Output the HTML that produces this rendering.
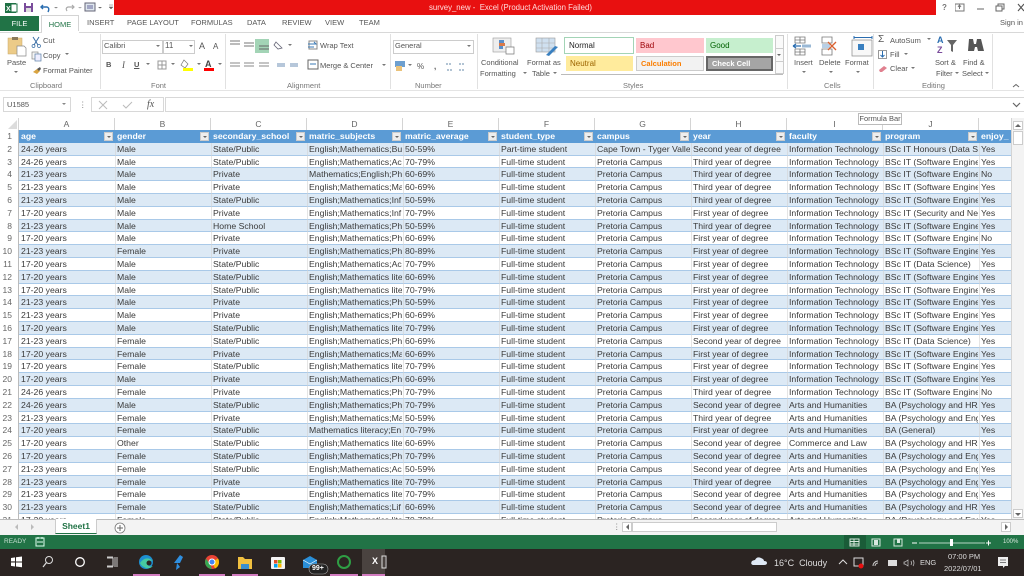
<!DOCTYPE html>
<html><head><meta charset="utf-8"><style>
html,body{margin:0;padding:0;background:#fff}
#p{position:relative;width:1024px;height:576px;overflow:hidden;background:#fff;font-family:"Liberation Sans",sans-serif;color:#555;font-size:7.5px;filter:blur(.3px)}
.a{position:absolute}
.t{position:absolute;white-space:nowrap;line-height:10px}
.g{color:#777}
#sheet{position:absolute;left:0;top:130px;width:1011px;height:389px;overflow:hidden}
.r{position:absolute;left:0;width:1011px;height:12.8px;line-height:12.8px;font-size:8.7px;color:#3a3a3a;box-sizing:border-box;border-bottom:1px solid #a9c9e8}
.r.o{background:#dce9f5}
.r i{position:absolute;top:0;font-style:normal;overflow:hidden;white-space:nowrap;height:12px;width:95px;padding-left:2px;box-sizing:border-box}
.r b{position:absolute;left:0;top:0;width:19px;text-align:right;padding-right:6px;box-sizing:border-box;font-weight:normal;color:#666;background:#fff;height:12.8px;border-right:1px solid #bbb;font-size:8.5px}
.c1{left:19px}.c2{left:115px}.c3{left:211px}.c4{left:307px}.c5{left:403px}.c6{left:499px}.c7{left:595px}.c8{left:691px}.c9{left:787px}.c10{left:883px}.c11{left:979px}
.r i.c11{width:31px}
.r.h{background:#5b9bd5;color:#fff;font-weight:bold;border-bottom:1px solid #5b9bd5}
.r.h b{background:#fff;font-weight:normal;color:#666}
.f{position:absolute;top:2px;width:9px;height:9px;background:#eee;border:1px solid #ccc;box-sizing:border-box}
.f:after{content:"";position:absolute;left:2px;top:3px;border:2px solid transparent;border-top:2px solid #666}
.ch{position:absolute;top:118px;height:12px;width:96px;text-align:center;line-height:12px;font-size:8.5px;color:#666;border-right:1px solid #d4d4d4;box-sizing:border-box;background:#fff}
.style{position:absolute;height:15px;line-height:15px;font-size:8px;padding-left:4px;box-sizing:border-box}
.sep{position:absolute;top:34px;width:1px;height:55px;background:#e1e1e1}
</style></head><body><div id="p">

<!-- title bar -->
<div class="a" style="left:114px;top:0;width:822px;height:15px;background:#e81010"></div>
<div class="t" style="left:429px;top:3px;color:#fdd;font-size:7.8px">survey_new -&nbsp; Excel (Product Activation Failed)</div>
<svg class="a" style="left:0;top:0" width="114" height="15" viewBox="0 0 114 15">
<rect x="5" y="3" width="11" height="10" fill="#1f7145"/><rect x="11" y="4" width="6" height="8" fill="#fff" stroke="#1f7145"/><text x="6" y="11" font-size="7" font-weight="bold" fill="#fff" font-family="Liberation Sans">X</text>
<rect x="24" y="3" width="9" height="9" fill="#7a4c9b"/><rect x="26" y="3" width="5" height="3" fill="#fff"/><rect x="26" y="8" width="5" height="4" fill="#ddd"/>
<path d="M43 5 L41 7 L43 9 M41 7 H47 Q50 8 48 12" stroke="#2a6db0" stroke-width="1.4" fill="none"/><path d="M54 7l2 1.500 2-1.500z" fill="#888"/>
<path d="M72 5 L74 7 L72 9 M74 7 H68 Q65 8 67 11" stroke="#aaa" stroke-width="1.2" fill="none"/><path d="M78 7l2 1.500 2-1.500z" fill="#aaa"/>
<rect x="85" y="3" width="10" height="8" fill="#dfe7ef" stroke="#667"/><path d="M87 6h6M87 8h6" stroke="#669"/><path d="M98 7l2 1.500 2-1.500z" fill="#666"/><path d="M109 5h4M109 7l2 2 2-2z" fill="#666" stroke="#666" stroke-width=".5"/>
</svg>
<div class="t g" style="left:942px;top:3px;font-size:8px;font-weight:bold">?</div>
<svg class="a" style="left:955px;top:0" width="69" height="15"><rect x="0" y="4" width="9" height="7" fill="none" stroke="#777"/><path d="M4.500 5v4M3 7l1.500-2 1.500 2" stroke="#777" fill="none"/><path d="M22 9h7" stroke="#666"/><rect x="41" y="6" width="6" height="5" fill="none" stroke="#666"/><path d="M43 6V4h6v5h-2" stroke="#666" fill="none"/><path d="M63 4l6 7M69 4l-6 7" stroke="#555" stroke-width="1.1"/></svg>

<!-- tabs -->
<div class="a" style="left:0;top:16px;width:39px;height:15px;background:#217346;color:#fff;text-align:center;line-height:15px;font-size:7.5px">FILE</div>
<div class="a" style="left:41px;top:15px;width:38px;height:17px;background:#fff;border:1px solid #d4d4d4;border-bottom:0;box-sizing:border-box;text-align:center;line-height:17px;color:#217346;font-size:7.5px">HOME</div>
<div class="a" style="left:0;top:31.500px;width:1024px;height:1px;background:#d8d8d8"></div>
<div class="a" style="left:41.500px;top:31px;width:37px;height:2px;background:#fff"></div>
<div class="t" style="left:87px;top:18px">INSERT</div>
<div class="t" style="left:127px;top:18px">PAGE LAYOUT</div>
<div class="t" style="left:191px;top:18px">FORMULAS</div>
<div class="t" style="left:247px;top:18px">DATA</div>
<div class="t" style="left:282px;top:18px">REVIEW</div>
<div class="t" style="left:325px;top:18px">VIEW</div>
<div class="t" style="left:359px;top:18px">TEAM</div>
<div class="t" style="left:1000px;top:18px">Sign in</div>

<!-- clipboard -->
<svg class="a" style="left:6px;top:36px" width="22" height="22"><rect x="2" y="2" width="14" height="16" fill="#eccb88" stroke="#c8a868" stroke-width=".5"/><rect x="6" y="1" width="6" height="3" fill="#8a7a5a"/><path d="M11 10h7l2 2v8h-9z" fill="#fff" stroke="#888" stroke-width=".7"/></svg>
<div class="t" style="left:7px;top:58px;font-size:7.5px">Paste</div>
<div class="a" style="left:14px;top:71px;border:2px solid transparent;border-top:2px solid #777"></div>
<svg class="a" style="left:31px;top:36px" width="11" height="40"><path d="M2 1l5 8M8 1L3 9" stroke="#3a6ea5" fill="none"/><circle cx="2.500" cy="10" r="1.500" fill="none" stroke="#3a6ea5" stroke-width=".7"/><circle cx="8" cy="10" r="1.500" fill="none" stroke="#3a6ea5" stroke-width=".7"/><rect x="1" y="16" width="6" height="7" fill="#f4f4f4" stroke="#888" stroke-width=".7"/><rect x="4" y="18" width="6" height="7" fill="#eef" stroke="#5b7fa5" stroke-width=".7"/><path d="M2 36l4-3 3 2-3 3z" fill="#d9a441"/><path d="M6 33l3-2 1 2-2 2z" fill="#555"/></svg>
<div class="t" style="left:43px;top:36px">Cut</div>
<div class="t" style="left:43px;top:51px">Copy</div>
<div class="a" style="left:65px;top:53px;border:2px solid transparent;border-top:2px solid #777"></div>
<div class="t" style="left:43px;top:66px">Format Painter</div>
<div class="t g" style="left:30px;top:81px">Clipboard</div>
<div class="sep" style="left:100px"></div>

<!-- font -->
<div class="a" style="left:102px;top:40px;width:61px;height:14px;border:1px solid #ccc;box-sizing:border-box"></div>
<div class="t" style="left:104px;top:41px">Calibri</div>
<div class="a" style="left:156px;top:45px;border:2px solid transparent;border-top:2px solid #777"></div>
<div class="a" style="left:163px;top:40px;width:32px;height:14px;border:1px solid #ccc;box-sizing:border-box"></div>
<div class="t" style="left:165px;top:41px;font-size:8px">11</div>
<div class="a" style="left:189px;top:45px;border:2px solid transparent;border-top:2px solid #777"></div>
<div class="t" style="left:199px;top:41px;font-size:9px">A</div><div class="t" style="left:213px;top:42px;font-size:8px">A</div>
<div class="t" style="left:106px;top:60px;font-weight:bold">B</div>
<div class="t" style="left:122px;top:60px;font-style:italic;font-family:'Liberation Serif',serif;font-size:9px">I</div>
<div class="t" style="left:134px;top:60px;text-decoration:underline;font-weight:bold">U</div>
<svg class="a" style="left:143px;top:58px" width="82" height="14"><path d="M3 5l2 2 2-2z" fill="#777"/><rect x="15" y="3" width="8" height="8" fill="none" stroke="#999"/><path d="M19 3v8M15 7h8" stroke="#999"/><path d="M28 5l2 2 2-2z" fill="#777"/><path d="M41 2l4 4-3 4-4-3z" fill="#fff" stroke="#777" stroke-width=".7"/><rect x="40" y="10" width="10" height="3" fill="#ff0"/><path d="M54 5l2 2 2-2z" fill="#777"/><text x="62" y="9" font-size="9" font-weight="bold" fill="#444" font-family="Liberation Sans">A</text><rect x="61" y="10" width="10" height="3" fill="#f00"/><path d="M75 5l2 2 2-2z" fill="#777"/></svg>
<div class="t g" style="left:151px;top:81px">Font</div>
<div class="sep" style="left:225px"></div>

<!-- alignment -->
<div class="a" style="left:255px;top:39px;width:14px;height:14px;background:#a3d4b6"></div>
<svg class="a" style="left:228px;top:38px" width="82" height="34"><path d="M2 3h10M2 6h10" stroke="#777"/><path d="M16 5h10M16 8h10" stroke="#777"/><path d="M31 8h10M31 11h10" stroke="#666"/><path d="M48 4l6 6-4 1-4-4z" fill="none" stroke="#667" stroke-width=".8"/><path d="M60 6l2 2 2-2z" fill="#777"/><path d="M2 25h10M2 28h10M16 25h10M16 28h10M31 25h10M31 28h10" stroke="#888"/><path d="M49 26h8M62 26h8M49 28h8M62 28h8" stroke="#6d8fb5"/></svg>
<svg class="a" style="left:307px;top:40px" width="12" height="32"><rect x="2" y="1" width="8" height="8" fill="#fff" stroke="#888"/><path d="M1 4h8l-2-2M1 7h6" stroke="#3a7ab5" fill="none"/><rect x="1" y="20" width="10" height="9" fill="#fff" stroke="#666"/><path d="M3 24h6" stroke="#3a7ab5"/></svg>
<div class="t" style="left:320px;top:41px">Wrap Text</div>
<div class="t" style="left:320px;top:61px">Merge &amp; Center</div>
<div class="a" style="left:382px;top:64px;border:2px solid transparent;border-top:2px solid #777"></div>
<div class="t g" style="left:287px;top:81px">Alignment</div>
<div class="sep" style="left:390px"></div>

<!-- number -->
<div class="a" style="left:393px;top:40px;width:81px;height:14px;border:1px solid #ccc;box-sizing:border-box"></div>
<div class="t" style="left:395px;top:41px">General</div>
<div class="a" style="left:467px;top:45px;border:2px solid transparent;border-top:2px solid #777"></div>
<svg class="a" style="left:393px;top:59px" width="82" height="14"><rect x="2" y="2" width="10" height="6" fill="#6d9fcf"/><rect x="3" y="7" width="6" height="5" fill="#eac27a"/><path d="M15 5l2 2 2-2z" fill="#777"/><text x="24" y="10" font-size="8" fill="#555" font-family="Liberation Sans">%</text><text x="41" y="10" font-size="8" font-weight="bold" fill="#555" font-family="Liberation Sans">,</text><path d="M53 5h6M54 11h6M66 5h6M66 11h6" stroke="#6688aa" stroke-dasharray="2 1"/></svg>
<div class="t g" style="left:415px;top:81px">Number</div>
<div class="sep" style="left:477px"></div>

<!-- styles -->
<svg class="a" style="left:491px;top:37px" width="130" height="26"><rect x="2" y="1" width="18" height="14" fill="#eee" stroke="#999" stroke-width=".6"/><rect x="8" y="3" width="5" height="3" fill="#5b8fc9"/><rect x="8" y="6" width="6" height="3" fill="#d97a4a"/><rect x="8" y="9" width="4" height="3" fill="#5b8fc9"/><path d="M15 10h8v7h-8z" fill="#fff" stroke="#777" stroke-width=".7"/><rect x="45" y="1" width="19" height="14" fill="#cfe0f0" stroke="#999" stroke-width=".6"/><path d="M45 6h19M45 11h19M51 1v14M58 1v14" stroke="#aaa" stroke-width=".6"/><path d="M55 18l9-9 3 1-9 9z" fill="#3a80c0"/></svg>
<div class="t" style="left:481px;top:58px">Conditional</div>
<div class="t" style="left:527px;top:58px">Format as</div>
<div class="t" style="left:480px;top:69px">Formatting</div>
<div class="t" style="left:532px;top:69px">Table</div>
<div class="a" style="left:523px;top:72px;border:2px solid transparent;border-top:2px solid #777"></div>
<div class="a" style="left:553px;top:72px;border:2px solid transparent;border-top:2px solid #777"></div>
<div class="style" style="left:564px;top:37px;width:70px;height:17px;border:1px solid #a3d4b6;line-height:15px;color:#222;background:#fff">Normal</div>
<div class="style" style="left:636px;top:38px;width:68px;background:#ffc7ce;color:#9c0006">Bad</div>
<div class="style" style="left:706px;top:38px;width:67px;background:#c6efce;color:#006100">Good</div>
<div class="style" style="left:566px;top:56px;width:67px;background:#ffeb9c;color:#9c6500">Neutral</div>
<div class="style" style="left:636px;top:56px;width:68px;background:#f2f2f2;color:#fa7d00;font-weight:bold;border:1px solid #ccc;line-height:13px;font-size:7.5px">Calculation</div>
<div class="style" style="left:706px;top:56px;width:67px;background:#a5a5a5;color:#fff;font-weight:bold;border:2px solid #666;line-height:11px;font-size:7.5px">Check Cell</div>
<div class="a" style="left:561px;top:73.500px;width:222px;height:1px;background:#bbb"></div>
<div class="a" style="left:775px;top:35px;width:9px;height:39px;border:1px solid #ccc;box-sizing:border-box;background:#fafafa"></div>
<div class="a" style="left:775px;top:48px;width:9px;height:1px;background:#ccc"></div><div class="a" style="left:775px;top:61px;width:9px;height:1px;background:#ccc"></div>
<div class="a" style="left:777px;top:54px;border:2px solid transparent;border-top:2px solid #666"></div>
<div class="t g" style="left:623px;top:81px">Styles</div>
<div class="sep" style="left:787px"></div>

<!-- cells -->
<svg class="a" style="left:792px;top:36px" width="82" height="22"><path d="M3 1h10v6H3zM3 4h10M8 1v6M3 13h10v6H3zM3 16h10M8 13v6" fill="none" stroke="#777" stroke-width=".8"/><path d="M1 10h8M1 10l3-2M1 10l3 2" stroke="#2a6db0" fill="none" stroke-width="1.2"/><rect x="10" y="8.500" width="9" height="3" fill="#9ab8d5"/><path d="M30 1h10v6H30zM30 13h10v6H30z" fill="none" stroke="#777" stroke-width=".8"/><rect x="30" y="8" width="8" height="4" fill="#b8cfe5"/><path d="M36 6l8 8M44 6l-8 8" stroke="#d8602f" stroke-width="1.3"/><path d="M62 0v3M80 0v3M62 1.500h18" stroke="#2a6db0"/><rect x="60" y="4" width="20" height="16" fill="#f8f8f8" stroke="#888" stroke-width=".7"/><rect x="66" y="8" width="6" height="6" fill="#3a80c0"/></svg>
<div class="t" style="left:794px;top:58px">Insert</div>
<div class="t" style="left:819px;top:58px">Delete</div>
<div class="t" style="left:845px;top:58px">Format</div>
<div class="a" style="left:802px;top:71px;border:2px solid transparent;border-top:2px solid #777"></div>
<div class="a" style="left:829px;top:71px;border:2px solid transparent;border-top:2px solid #777"></div>
<div class="a" style="left:856px;top:71px;border:2px solid transparent;border-top:2px solid #777"></div>
<div class="t g" style="left:824px;top:81px">Cells</div>
<div class="sep" style="left:873px"></div>

<!-- editing -->
<div class="t" style="left:878px;top:35px;font-size:10px;color:#555">Σ</div>
<div class="t" style="left:890px;top:36px">AutoSum</div>
<div class="a" style="left:927px;top:38px;border:2px solid transparent;border-top:2px solid #777"></div>
<svg class="a" style="left:878px;top:50px" width="10" height="28"><rect x="0.500" y="0.500" width="8" height="8" fill="#fff" stroke="#999"/><path d="M4.500 1v6M2.500 5l2 2 2-2" stroke="#2a6db0" fill="none"/><path d="M1 20l5-4 3 2-5 4H2z" fill="#e0808f"/></svg>
<div class="t" style="left:890px;top:50px">Fill</div>
<div class="a" style="left:904px;top:53px;border:2px solid transparent;border-top:2px solid #777"></div>
<div class="t" style="left:890px;top:64px">Clear</div>
<div class="a" style="left:911px;top:67px;border:2px solid transparent;border-top:2px solid #777"></div>
<div class="t" style="left:937px;top:35px;font-size:9px;color:#2a6db0;font-weight:bold">A</div>
<div class="t" style="left:937px;top:45px;font-size:9px;color:#7a4c9b;font-weight:bold">Z</div>
<svg class="a" style="left:946px;top:36px" width="44" height="19"><path d="M1 4h10l-4 5v7l-2-1V9z" fill="#666"/><path d="M23 3h4l1 5h2l1-5h4l3 12h-6l-1-4h-2l-1 4h-6z" fill="#555"/></svg>
<div class="t" style="left:935px;top:58px">Sort &amp;</div>
<div class="t" style="left:963px;top:58px">Find &amp;</div>
<div class="t" style="left:936px;top:69px">Filter</div>
<div class="t" style="left:962px;top:69px">Select</div>
<div class="a" style="left:955px;top:72px;border:2px solid transparent;border-top:2px solid #777"></div>
<div class="a" style="left:985px;top:72px;border:2px solid transparent;border-top:2px solid #777"></div>
<div class="t g" style="left:922px;top:81px">Editing</div>
<div class="sep" style="left:992px"></div>
<svg class="a" style="left:1011px;top:83px" width="10" height="6"><path d="M2 4l3-2.500L8 4" stroke="#666" fill="none"/></svg>
<div class="a" style="left:0;top:90px;width:1024px;height:1px;background:#e4e4e4"></div>

<!-- formula bar -->
<div class="a" style="left:3px;top:97px;width:68px;height:15px;border:1px solid #d8d8d8;box-sizing:border-box"></div>
<div class="t" style="left:7px;top:100px">U1585</div>
<div class="a" style="left:62px;top:103px;border:2px solid transparent;border-top:2px solid #888"></div>
<div class="t g" style="left:79px;top:100px">⋮</div>
<div class="a" style="left:91px;top:97px;width:73px;height:15px;border:1px solid #d8d8d8;box-sizing:border-box"></div>
<svg class="a" style="left:97px;top:99px" width="60" height="12"><path d="M2 2l8 8M10 2l-8 8" stroke="#bbb"/><path d="M26 6l3 3 6-6" stroke="#bbb" fill="none"/></svg>
<div class="t" style="left:147px;top:100px;font-family:'Liberation Serif',serif;font-style:italic;font-size:10px;color:#555">fx</div>
<div class="a" style="left:165px;top:97px;width:859px;height:15px;border:1px solid #d8d8d8;border-right:0;box-sizing:border-box"></div>
<svg class="a" style="left:1012px;top:102px" width="10" height="6"><path d="M1 1l3.500 3.500L8 1" stroke="#666" stroke-width="1.2" fill="none"/></svg>

<!-- column headers -->
<div class="a" style="left:0;top:118px;width:19px;height:12px;background:#fff;border-right:1px solid #d4d4d4;box-sizing:border-box"></div>
<svg class="a" style="left:7px;top:120px" width="11" height="10"><path d="M10 0v9H1z" fill="#dcdcdc"/></svg>
<div class="ch" style="left:19px">A</div><div class="ch" style="left:115px">B</div><div class="ch" style="left:211px">C</div><div class="ch" style="left:307px">D</div><div class="ch" style="left:403px">E</div><div class="ch" style="left:499px">F</div><div class="ch" style="left:595px">G</div><div class="ch" style="left:691px">H</div><div class="ch" style="left:787px">I</div><div class="ch" style="left:883px">J</div>

<!-- sheet -->
<div id="sheet">
<div class="r h" style="top:0"><b>1</b><i class="c1">age</i><i class="c2">gender</i><i class="c3">secondary_school</i><i class="c4">matric_subjects</i><i class="c5">matric_average</i><i class="c6">student_type</i><i class="c7">campus</i><i class="c8">year</i><i class="c9">faculty</i><i class="c10">program</i><i class="c11">enjoy_</i>
<span class="f" style="left:104px"></span><span class="f" style="left:200px"></span><span class="f" style="left:296px"></span><span class="f" style="left:392px"></span><span class="f" style="left:488px"></span><span class="f" style="left:584px"></span><span class="f" style="left:680px"></span><span class="f" style="left:776px"></span><span class="f" style="left:872px"></span><span class="f" style="left:968px"></span></div>
<div class="r o" style="top:12.800px"><b>2</b><i class="c1">24-26 years</i><i class="c2">Male</i><i class="c3">State/Public</i><i class="c4">English;Mathematics;Bu</i><i class="c5">50-59%</i><i class="c6">Part-time student</i><i class="c7">Cape Town - Tyger Valle</i><i class="c8">Second year of degree</i><i class="c9">Information Technology</i><i class="c10">BSc IT Honours (Data Sc</i><i class="c11">Yes</i></div>
<div class="r" style="top:25.600px"><b>3</b><i class="c1">24-26 years</i><i class="c2">Male</i><i class="c3">State/Public</i><i class="c4">English;Mathematics;Ac</i><i class="c5">70-79%</i><i class="c6">Full-time student</i><i class="c7">Pretoria Campus</i><i class="c8">Third year of degree</i><i class="c9">Information Technology</i><i class="c10">BSc IT (Software Engine</i><i class="c11">Yes</i></div>
<div class="r o" style="top:38.400px"><b>4</b><i class="c1">21-23 years</i><i class="c2">Male</i><i class="c3">Private</i><i class="c4">Mathematics;English;Phy</i><i class="c5">60-69%</i><i class="c6">Full-time student</i><i class="c7">Pretoria Campus</i><i class="c8">Third year of degree</i><i class="c9">Information Technology</i><i class="c10">BSc IT (Software Engine</i><i class="c11">No</i></div>
<div class="r" style="top:51.200px"><b>5</b><i class="c1">21-23 years</i><i class="c2">Male</i><i class="c3">Private</i><i class="c4">English;Mathematics;Ma</i><i class="c5">60-69%</i><i class="c6">Full-time student</i><i class="c7">Pretoria Campus</i><i class="c8">Third year of degree</i><i class="c9">Information Technology</i><i class="c10">BSc IT (Software Engine</i><i class="c11">Yes</i></div>
<div class="r o" style="top:64px"><b>6</b><i class="c1">21-23 years</i><i class="c2">Male</i><i class="c3">State/Public</i><i class="c4">English;Mathematics;Inf</i><i class="c5">50-59%</i><i class="c6">Full-time student</i><i class="c7">Pretoria Campus</i><i class="c8">Third year of degree</i><i class="c9">Information Technology</i><i class="c10">BSc IT (Software Engine</i><i class="c11">Yes</i></div>
<div class="r" style="top:76.800px"><b>7</b><i class="c1">17-20 years</i><i class="c2">Male</i><i class="c3">Private</i><i class="c4">English;Mathematics;Inf</i><i class="c5">70-79%</i><i class="c6">Full-time student</i><i class="c7">Pretoria Campus</i><i class="c8">First year of degree</i><i class="c9">Information Technology</i><i class="c10">BSc IT (Security and Netw</i><i class="c11">Yes</i></div>
<div class="r o" style="top:89.600px"><b>8</b><i class="c1">21-23 years</i><i class="c2">Male</i><i class="c3">Home School</i><i class="c4">English;Mathematics;Ph</i><i class="c5">50-59%</i><i class="c6">Full-time student</i><i class="c7">Pretoria Campus</i><i class="c8">Third year of degree</i><i class="c9">Information Technology</i><i class="c10">BSc IT (Software Engine</i><i class="c11">Yes</i></div>
<div class="r" style="top:102.400px"><b>9</b><i class="c1">17-20 years</i><i class="c2">Male</i><i class="c3">Private</i><i class="c4">English;Mathematics;Ph</i><i class="c5">60-69%</i><i class="c6">Full-time student</i><i class="c7">Pretoria Campus</i><i class="c8">First year of degree</i><i class="c9">Information Technology</i><i class="c10">BSc IT (Software Engine</i><i class="c11">No</i></div>
<div class="r o" style="top:115.200px"><b>10</b><i class="c1">21-23 years</i><i class="c2">Female</i><i class="c3">Private</i><i class="c4">English;Mathematics;Ph</i><i class="c5">80-89%</i><i class="c6">Full-time student</i><i class="c7">Pretoria Campus</i><i class="c8">First year of degree</i><i class="c9">Information Technology</i><i class="c10">BSc IT (Software Engine</i><i class="c11">Yes</i></div>
<div class="r" style="top:128px"><b>11</b><i class="c1">17-20 years</i><i class="c2">Male</i><i class="c3">State/Public</i><i class="c4">English;Mathematics;Ac</i><i class="c5">70-79%</i><i class="c6">Full-time student</i><i class="c7">Pretoria Campus</i><i class="c8">First year of degree</i><i class="c9">Information Technology</i><i class="c10">BSc IT (Data Science)</i><i class="c11">Yes</i></div>
<div class="r o" style="top:140.800px"><b>12</b><i class="c1">17-20 years</i><i class="c2">Male</i><i class="c3">State/Public</i><i class="c4">English;Mathematics lite</i><i class="c5">60-69%</i><i class="c6">Full-time student</i><i class="c7">Pretoria Campus</i><i class="c8">First year of degree</i><i class="c9">Information Technology</i><i class="c10">BSc IT (Software Engine</i><i class="c11">Yes</i></div>
<div class="r" style="top:153.600px"><b>13</b><i class="c1">17-20 years</i><i class="c2">Male</i><i class="c3">State/Public</i><i class="c4">English;Mathematics lite</i><i class="c5">70-79%</i><i class="c6">Full-time student</i><i class="c7">Pretoria Campus</i><i class="c8">First year of degree</i><i class="c9">Information Technology</i><i class="c10">BSc IT (Software Engine</i><i class="c11">Yes</i></div>
<div class="r o" style="top:166.400px"><b>14</b><i class="c1">21-23 years</i><i class="c2">Male</i><i class="c3">Private</i><i class="c4">English;Mathematics;Ph</i><i class="c5">50-59%</i><i class="c6">Full-time student</i><i class="c7">Pretoria Campus</i><i class="c8">First year of degree</i><i class="c9">Information Technology</i><i class="c10">BSc IT (Software Engine</i><i class="c11">Yes</i></div>
<div class="r" style="top:179.200px"><b>15</b><i class="c1">21-23 years</i><i class="c2">Male</i><i class="c3">Private</i><i class="c4">English;Mathematics;Ph</i><i class="c5">60-69%</i><i class="c6">Full-time student</i><i class="c7">Pretoria Campus</i><i class="c8">First year of degree</i><i class="c9">Information Technology</i><i class="c10">BSc IT (Software Engine</i><i class="c11">Yes</i></div>
<div class="r o" style="top:192px"><b>16</b><i class="c1">17-20 years</i><i class="c2">Male</i><i class="c3">State/Public</i><i class="c4">English;Mathematics lite</i><i class="c5">70-79%</i><i class="c6">Full-time student</i><i class="c7">Pretoria Campus</i><i class="c8">First year of degree</i><i class="c9">Information Technology</i><i class="c10">BSc IT (Software Engine</i><i class="c11">Yes</i></div>
<div class="r" style="top:204.800px"><b>17</b><i class="c1">21-23 years</i><i class="c2">Female</i><i class="c3">State/Public</i><i class="c4">English;Mathematics;Ph</i><i class="c5">60-69%</i><i class="c6">Full-time student</i><i class="c7">Pretoria Campus</i><i class="c8">Second year of degree</i><i class="c9">Information Technology</i><i class="c10">BSc IT (Data Science)</i><i class="c11">Yes</i></div>
<div class="r o" style="top:217.600px"><b>18</b><i class="c1">17-20 years</i><i class="c2">Female</i><i class="c3">Private</i><i class="c4">English;Mathematics;Ma</i><i class="c5">60-69%</i><i class="c6">Full-time student</i><i class="c7">Pretoria Campus</i><i class="c8">First year of degree</i><i class="c9">Information Technology</i><i class="c10">BSc IT (Software Engine</i><i class="c11">Yes</i></div>
<div class="r" style="top:230.400px"><b>19</b><i class="c1">17-20 years</i><i class="c2">Female</i><i class="c3">State/Public</i><i class="c4">English;Mathematics lite</i><i class="c5">70-79%</i><i class="c6">Full-time student</i><i class="c7">Pretoria Campus</i><i class="c8">First year of degree</i><i class="c9">Information Technology</i><i class="c10">BSc IT (Software Engine</i><i class="c11">Yes</i></div>
<div class="r o" style="top:243.200px"><b>20</b><i class="c1">17-20 years</i><i class="c2">Male</i><i class="c3">Private</i><i class="c4">English;Mathematics;Ph</i><i class="c5">60-69%</i><i class="c6">Full-time student</i><i class="c7">Pretoria Campus</i><i class="c8">First year of degree</i><i class="c9">Information Technology</i><i class="c10">BSc IT (Software Engine</i><i class="c11">Yes</i></div>
<div class="r" style="top:256px"><b>21</b><i class="c1">24-26 years</i><i class="c2">Female</i><i class="c3">Private</i><i class="c4">English;Mathematics;Ph</i><i class="c5">70-79%</i><i class="c6">Full-time student</i><i class="c7">Pretoria Campus</i><i class="c8">Third year of degree</i><i class="c9">Information Technology</i><i class="c10">BSc IT (Software Engine</i><i class="c11">No</i></div>
<div class="r o" style="top:268.800px"><b>22</b><i class="c1">24-26 years</i><i class="c2">Male</i><i class="c3">State/Public</i><i class="c4">English;Mathematics;Ph</i><i class="c5">70-79%</i><i class="c6">Full-time student</i><i class="c7">Pretoria Campus</i><i class="c8">Second year of degree</i><i class="c9">Arts and Humanities</i><i class="c10">BA (Psychology and HR/</i><i class="c11">Yes</i></div>
<div class="r" style="top:281.600px"><b>23</b><i class="c1">21-23 years</i><i class="c2">Female</i><i class="c3">Private</i><i class="c4">English;Mathematics;Ma</i><i class="c5">50-59%</i><i class="c6">Full-time student</i><i class="c7">Pretoria Campus</i><i class="c8">Third year of degree</i><i class="c9">Arts and Humanities</i><i class="c10">BA (Psychology and Engl</i><i class="c11">Yes</i></div>
<div class="r o" style="top:294.400px"><b>24</b><i class="c1">17-20 years</i><i class="c2">Female</i><i class="c3">State/Public</i><i class="c4">Mathematics literacy;En</i><i class="c5">70-79%</i><i class="c6">Full-time student</i><i class="c7">Pretoria Campus</i><i class="c8">First year of degree</i><i class="c9">Arts and Humanities</i><i class="c10">BA (General)</i><i class="c11">Yes</i></div>
<div class="r" style="top:307.200px"><b>25</b><i class="c1">17-20 years</i><i class="c2">Other</i><i class="c3">State/Public</i><i class="c4">English;Mathematics lite</i><i class="c5">60-69%</i><i class="c6">Full-time student</i><i class="c7">Pretoria Campus</i><i class="c8">Second year of degree</i><i class="c9">Commerce and Law</i><i class="c10">BA (Psychology and HR M</i><i class="c11">Yes</i></div>
<div class="r o" style="top:320px"><b>26</b><i class="c1">17-20 years</i><i class="c2">Female</i><i class="c3">State/Public</i><i class="c4">English;Mathematics;Ph</i><i class="c5">70-79%</i><i class="c6">Full-time student</i><i class="c7">Pretoria Campus</i><i class="c8">Second year of degree</i><i class="c9">Arts and Humanities</i><i class="c10">BA (Psychology and Engl</i><i class="c11">Yes</i></div>
<div class="r" style="top:332.800px"><b>27</b><i class="c1">21-23 years</i><i class="c2">Female</i><i class="c3">State/Public</i><i class="c4">English;Mathematics;Ac</i><i class="c5">50-59%</i><i class="c6">Full-time student</i><i class="c7">Pretoria Campus</i><i class="c8">Second year of degree</i><i class="c9">Arts and Humanities</i><i class="c10">BA (Psychology and Engl</i><i class="c11">Yes</i></div>
<div class="r o" style="top:345.600px"><b>28</b><i class="c1">21-23 years</i><i class="c2">Female</i><i class="c3">Private</i><i class="c4">English;Mathematics lite</i><i class="c5">70-79%</i><i class="c6">Full-time student</i><i class="c7">Pretoria Campus</i><i class="c8">Third year of degree</i><i class="c9">Arts and Humanities</i><i class="c10">BA (Psychology and Engl</i><i class="c11">Yes</i></div>
<div class="r" style="top:358.400px"><b>29</b><i class="c1">21-23 years</i><i class="c2">Female</i><i class="c3">Private</i><i class="c4">English;Mathematics lite</i><i class="c5">70-79%</i><i class="c6">Full-time student</i><i class="c7">Pretoria Campus</i><i class="c8">Second year of degree</i><i class="c9">Arts and Humanities</i><i class="c10">BA (Psychology and Engl</i><i class="c11">Yes</i></div>
<div class="r o" style="top:371.200px"><b>30</b><i class="c1">21-23 years</i><i class="c2">Female</i><i class="c3">State/Public</i><i class="c4">English;Mathematics;Lif</i><i class="c5">60-69%</i><i class="c6">Full-time student</i><i class="c7">Pretoria Campus</i><i class="c8">Second year of degree</i><i class="c9">Arts and Humanities</i><i class="c10">BA (Psychology and HR M</i><i class="c11">Yes</i></div>
<div class="r" style="top:384px"><b>31</b><i class="c1">17-20 years</i><i class="c2">Female</i><i class="c3">State/Public</i><i class="c4">English;Mathematics lite</i><i class="c5">70-79%</i><i class="c6">Full-time student</i><i class="c7">Pretoria Campus</i><i class="c8">Second year of degree</i><i class="c9">Arts and Humanities</i><i class="c10">BA (Psychology and Engl</i><i class="c11">Yes</i></div>
</div>
<div class="a" style="left:114.500px;top:143px;width:1px;height:376px;background:#d4d4d4;opacity:.6"></div>
<div class="a" style="left:210.500px;top:143px;width:1px;height:376px;background:#d4d4d4;opacity:.6"></div>
<div class="a" style="left:306.500px;top:143px;width:1px;height:376px;background:#d4d4d4;opacity:.6"></div>
<div class="a" style="left:402.500px;top:143px;width:1px;height:376px;background:#d4d4d4;opacity:.6"></div>
<div class="a" style="left:498.500px;top:143px;width:1px;height:376px;background:#d4d4d4;opacity:.6"></div>
<div class="a" style="left:594.500px;top:143px;width:1px;height:376px;background:#d4d4d4;opacity:.6"></div>
<div class="a" style="left:690.500px;top:143px;width:1px;height:376px;background:#d4d4d4;opacity:.6"></div>
<div class="a" style="left:786.500px;top:143px;width:1px;height:376px;background:#d4d4d4;opacity:.6"></div>
<div class="a" style="left:882.500px;top:143px;width:1px;height:376px;background:#d4d4d4;opacity:.6"></div>
<div class="a" style="left:978.500px;top:143px;width:1px;height:376px;background:#d4d4d4;opacity:.6"></div>

<!-- tooltip -->
<div class="a" style="left:858px;top:113px;width:44px;height:12px;background:#fff;border:1px solid #bbb;box-sizing:border-box;font-size:7.5px;line-height:10px;text-align:center;color:#555">Formula Bar</div>

<!-- v scrollbar -->
<div class="a" style="left:1011px;top:118px;width:13px;height:401px;background:#f3f3f3;border-left:1px solid #d4d4d4;box-sizing:border-box"></div>
<div class="a" style="left:1013px;top:121px;width:10px;height:9px;background:#fff;border:1px solid #ccc;box-sizing:border-box"></div>
<svg class="a" style="left:1015px;top:123px" width="6" height="5"><path d="M0 4l3-3 3 3z" fill="#666"/></svg>
<div class="a" style="left:1013px;top:131px;width:10px;height:14px;background:#fff;border:1px solid #ccc;box-sizing:border-box"></div>
<div class="a" style="left:1013px;top:509px;width:10px;height:9px;background:#fff;border:1px solid #ccc;box-sizing:border-box"></div>
<svg class="a" style="left:1015px;top:512px" width="6" height="5"><path d="M0 1l3 3 3-3z" fill="#666"/></svg>

<!-- sheet tabs -->
<div class="a" style="left:0;top:519px;width:1024px;height:16px;background:#f3f3f3;border-top:1px solid #bbb;box-sizing:border-box"></div>
<svg class="a" style="left:13px;top:523px" width="24" height="9"><path d="M5 1L2 4l3 3zM18 1l3 3-3 3z" fill="#bbb"/></svg>
<div class="a" style="left:55px;top:519px;width:42px;height:15px;background:#fff;border-left:1px solid #ccc;border-right:1px solid #ccc;border-bottom:1px solid #217346;box-sizing:border-box;text-align:center;line-height:14px;font-weight:bold;color:#217346;font-size:8.5px">Sheet1</div>
<svg class="a" style="left:114px;top:522px" width="12" height="12"><circle cx="6" cy="6" r="5" fill="#fff" stroke="#777" stroke-width=".8"/><path d="M6 3v6M3 6h6" stroke="#666"/></svg>
<div class="t g" style="left:613px;top:522px">⋮</div>
<div class="a" style="left:622px;top:522px;width:10px;height:10px;background:#fff;border:1px solid #ccc;box-sizing:border-box"></div>
<svg class="a" style="left:625px;top:524px" width="5" height="6"><path d="M4 0L1 3l3 3z" fill="#666"/></svg>
<div class="a" style="left:632px;top:522px;width:145px;height:10px;background:#fff;border:1px solid #ccc;box-sizing:border-box"></div>
<div class="a" style="left:1001px;top:522px;width:10px;height:10px;background:#fff;border:1px solid #ccc;box-sizing:border-box"></div>
<svg class="a" style="left:1004px;top:524px" width="5" height="6"><path d="M1 0l3 3-3 3z" fill="#666"/></svg>

<!-- status -->
<div class="a" style="left:0;top:535px;width:1024px;height:14px;background:#217346"></div>
<div class="t" style="left:4px;top:537px;color:#c8e0d2;font-size:6.5px">READY</div>
<svg class="a" style="left:35px;top:537px" width="10" height="10"><rect x="1" y="1" width="8" height="8" fill="none" stroke="#dfe" /><path d="M3 0v2M7 0v2M2 5h6" stroke="#dfe"/></svg>
<div class="a" style="left:844px;top:535px;width:22px;height:14px;background:#1a5c38"></div>
<svg class="a" style="left:848px;top:537px" width="176" height="11"><path d="M2 2h9v7H2zM2 4.500h9M2 7h9M6 2v7" fill="none" stroke="#d8e8de"/><rect x="24" y="2" width="8" height="7" fill="none" stroke="#d8e8de"/><rect x="26" y="3" width="4" height="5" fill="#d8e8de"/><path d="M46 2h8v7h-8z" fill="none" stroke="#d8e8de"/><path d="M49 2v4h3V2" fill="#d8e8de"/><path d="M64 6h5" stroke="#fff"/><path d="M71 6h66" stroke="#b8d4c4"/><rect x="102" y="2" width="3" height="7" fill="#fff"/><path d="M138 6h5M140.500 3.500v5" stroke="#fff"/></svg>
<div class="t" style="left:1003px;top:537px;color:#d8e8de;font-size:6px">100%</div>

<!-- taskbar -->
<div class="a" style="left:0;top:549px;width:1024px;height:27px;background:#2b2422"></div>
<div class="a" style="left:362px;top:549px;width:23px;height:27px;background:#4a4340"></div>
<svg class="a" style="left:0;top:549px" width="400" height="27">
<path d="M11 9l4-.6v4h-4zM16 8.300l6-.8v5h-6zM11 13.500h4v4l-4-.6zM16 13.500h6v4.800l-6-.8z" fill="#fff"/>
<circle cx="49" cy="11" r="3.500" fill="none" stroke="#ddd"/><path d="M46.500 13.500L43 18" stroke="#ddd" stroke-width="1.2"/>
<circle cx="80" cy="13" r="4.300" fill="none" stroke="#fff" stroke-width="1.3"/>
<path d="M107 9h6v8h-6M107 8h6M107 18h6" fill="none" stroke="#ccc"/><path d="M115 8v10M117 8v10" stroke="#ccc"/>
<circle cx="146" cy="13" r="7" fill="#1d8fd0"/><path d="M140 14q6-8 13-2-3-1-5 1t1 4q2 1 4 0-3 3-7 2-5-2-6-5z" fill="#47c9a0"/><circle cx="149" cy="14" r="2.500" fill="#2b2422"/>
<path d="M180 6l-6 8h3l-1 7 4-3-3-4h3l3-6z" fill="#2f8fe0"/>
<circle cx="212" cy="13" r="7" fill="#ea4335"/><path d="M212 13l6-3.500a7 7 0 0 1-3 10z" fill="#fbbc05"/><path d="M212 20a7 7 0 0 1-6-10.500l4 6z" fill="#34a853"/><circle cx="212" cy="13" r="3" fill="#4285f4" stroke="#fff"/>
<path d="M238 8h5l2 2h7v10h-14z" fill="#f0c040"/><rect x="241" y="15" width="8" height="5" fill="#3a90d0"/>
<rect x="271" y="8" width="14" height="12" rx="1" fill="#f4f4f4"/><rect x="274" y="11" width="3.500" height="3.500" fill="#e0502a"/><rect x="278" y="11" width="3.500" height="3.500" fill="#7fba00"/><rect x="274" y="15" width="3.500" height="3.500" fill="#00a4ef"/><rect x="278" y="15" width="3.500" height="3.500" fill="#ffb900"/>
<path d="M303 11l7-4 7 4v8h-14z" fill="#2a8fd8"/><path d="M303 11l7 4 7-4" stroke="#fff" fill="none" stroke-width=".6"/>
<rect x="309" y="15" width="19" height="10" rx="5" fill="#222" stroke="#aaa" stroke-width=".6"/>
<circle cx="344" cy="13" r="6" fill="none" stroke="#2f9e44" stroke-width="2"/>
<path d="M382 7h4v12h-4z" fill="none" stroke="#ddd"/>
</svg>
<div class="t" style="left:312px;top:564px;color:#fff;font-size:7px;font-weight:bold">99+</div>
<div class="t" style="left:372px;top:556px;color:#fff;font-weight:bold;font-size:9px">X</div>
<div class="a" style="left:133px;top:574px;width:27px;height:2px;background:#d27cc0"></div>
<div class="a" style="left:199px;top:574px;width:26px;height:2px;background:#d27cc0"></div>
<div class="a" style="left:232px;top:574px;width:26px;height:2px;background:#d27cc0"></div>
<div class="a" style="left:330px;top:574px;width:28px;height:2px;background:#d27cc0"></div>
<div class="a" style="left:362px;top:574px;width:23px;height:2px;background:#d27cc0"></div>
<svg class="a" style="left:750px;top:553px" width="20" height="16"><path d="M3 12q-3-1-1-4 2-1 3-1 2-4 6-2 3 1 3 3 3 0 3 2t-3 2z" fill="#dfe9f5"/></svg>
<div class="t" style="left:774px;top:558px;color:#ddd;font-size:9px">16°C&nbsp; Cloudy</div>
<svg class="a" style="left:838px;top:555px" width="100" height="16"><path d="M1 9l4-4 4 4" stroke="#ddd" fill="none"/><rect x="16" y="3" width="9" height="8" fill="none" stroke="#ddd"/><circle cx="23" cy="11" r="2.500" fill="#e81010"/><path d="M35 11a5 5 0 0 1 5-5M37 11a3 3 0 0 1 3-3" stroke="#ccc" fill="none"/><rect x="50" y="5" width="9" height="6" fill="#ddd"/><path d="M70 5v6l-3-2h-1V7h1zM73 6q1 2 0 4M75 5q2 3 0 6" stroke="#ccc" fill="none" stroke-width=".7"/></svg>
<div class="t" style="left:920px;top:558px;color:#ddd;font-size:7.5px">ENG</div>
<div class="t" style="left:948px;top:552px;color:#ddd;font-size:7.5px">07:00 PM</div>
<div class="t" style="left:944px;top:564px;color:#ddd;font-size:7.5px">2022/07/01</div>
<svg class="a" style="left:996px;top:556px" width="14" height="14"><path d="M2 1h10v9H9l-2 2v-2H2z" fill="#eee"/><path d="M4 4h6M4 6.500h6" stroke="#555" stroke-width=".7"/></svg>
</div></body></html>
